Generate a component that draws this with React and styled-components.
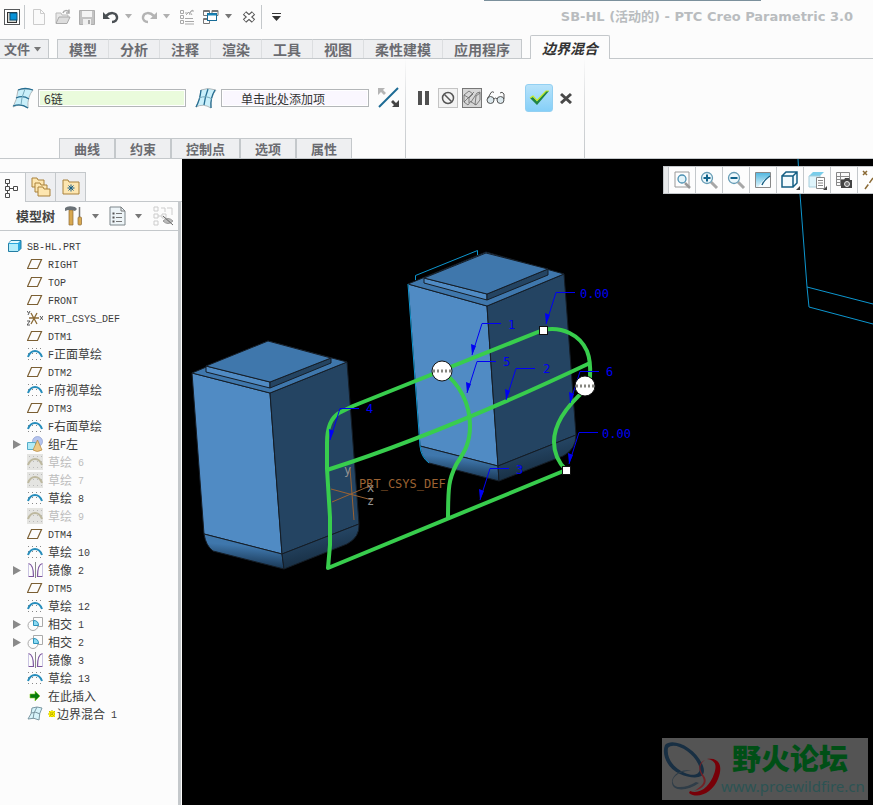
import React from "react";
import styled, { createGlobalStyle, css } from "styled-components";

const CJK = '"Noto Sans CJK SC", sans-serif';

const Global = createGlobalStyle`
  *, *::before, *::after { box-sizing: border-box; }
  body { margin: 0; background: #fcfcfc; font-family: "Liberation Sans", ${CJK}; color: #444; }
  button, input { font: inherit; color: inherit; }
  ul { margin: 0; padding: 0; list-style: none; }
  svg { display: block; flex: none; }
`;

const Shell = styled.div`
  display: flex;
  flex-direction: column;
  min-height: 100vh;
  overflow: hidden;
`;

/* ---------- title bar ---------- */
const TitleBar = styled.header`
  position: relative;
  display: flex;
  align-items: center;
  justify-content: space-between;
  height: 33px;
  padding: 0 20px 0 4px;
`;
const TopEdge = styled.div`
  position: absolute;
  top: 0;
  left: 484px;
  right: 112px;
  height: 1px;
  background: #7b909c;
`;
const QuickAccess = styled.div`
  display: flex;
  align-items: center;
  gap: 8px;
`;
const Title = styled.h1`
  margin: 0;
  font: bold 13px/16px "DejaVu Sans", ${CJK};
  color: #b9bcbf;
  white-space: nowrap;
`;
const IconButton = styled.button`
  display: grid;
  place-items: center;
  flex: none;
  width: ${(p) => p.$w || 16}px;
  height: ${(p) => p.$h || 16}px;
  margin: 0;
  padding: 0;
  border: 0;
  background: none;
`;
const CaretButton = styled(IconButton)`
  width: 9px;
  margin-left: -3px;
`;
const Divider = styled.span`
  width: 1px;
  height: 24px;
  margin: 0 -2px 0 -4px;
  background: #c4c8cb;
`;

/* ---------- ribbon tabs ---------- */
const Ribbon = styled.nav`
  display: flex;
  align-items: flex-end;
  height: 26px;
  border-bottom: 1px solid #c4c8cb;
`;
const tabBase = css`
  margin: 0;
  border: 1px solid #c4c8cb;
  border-bottom: 0;
  background: #eeeff1;
  color: #6a6b70;
  font-family: ${CJK};
  font-weight: 700;
  white-space: nowrap;
`;
const FileTab = styled.button`
  ${tabBase}
  display: flex;
  align-items: center;
  gap: 3px;
  height: 19px;
  padding: 0 6px 0 4px;
  border-left: 0;
  font-size: 13px;
  line-height: 16px;
`;
const TabStrip = styled.div`
  display: flex;
  margin-left: 8px;
  border-left: 1px solid #c4c8cb;
`;
const RibbonTab = styled.button`
  ${tabBase}
  height: 19px;
  padding: 0 11px;
  border-left: 0;
  border-right-color: ${(p) => (p.$last ? "#c4c8cb" : "#dcdee0")};
  font-size: 14px;
  line-height: 16px;
`;
const ActiveTab = styled.button`
  ${tabBase}
  height: 24px;
  margin: 0 0 -1px 8px;
  padding: 0 11px;
  border-radius: 2px 2px 0 0;
  background: #fcfcfc;
  color: #333;
  font-size: 14px;
  line-height: 20px;
  font-style: italic;
`;

/* ---------- dashboard ---------- */
const Dashboard = styled.section`
  display: flex;
  height: 100px;
  border-bottom: 1px solid #c4c8cb;
`;
const DashGroup = styled.div`
  display: flex;
  flex-direction: column;
  justify-content: space-between;
  padding: ${(p) => p.$pad || "0"};
  border-right: 1px solid;
  border-image: linear-gradient(#fcfcfc, #dcdee0 40%, #c4c8cb) 1;
`;
const Fields = styled.div`
  display: flex;
  align-items: center;
  height: 28px;
  margin-top: 25px;
  gap: ${(p) => p.$gap || 0}px;
`;
const Collector = styled.input`
  width: 148px;
  height: 18px;
  margin: 0 9px 0 4px;
  padding: 0 ${(p) => (p.$prompt ? 19 : 5)}px;
  border: 1px solid #b3b6b8;
  border-radius: 0;
  background: ${(p) => (p.$prompt ? "#faf7fe" : "#eafbdc")};
  box-shadow: inset 0 0 0 1px #fff;
  color: #333;
  font: 12px/16px ${CJK};
`;
const PanelTabs = styled.div`
  display: flex;
  margin-left: 48px;
`;
const PanelTab = styled.button`
  ${tabBase}
  height: 20px;
  padding: 0 14px;
  border-width: 1px 2px 0 0;
  font-size: 13px;
  line-height: 17px;
  &:first-child { box-shadow: -1px 0 #c4c8cb; }
  &:last-child { border-right-width: 1px; }
`;
const Toggle = styled(IconButton)`
  border: 1px solid ${(p) => (p.$on ? "#777" : "#c4c4c4")};
  background: ${(p) => (p.$on ? "#d6d6d6" : "#f3f3f3")};
`;
const Accept = styled(IconButton)`
  margin-left: 15px;
  border-radius: 3px;
  border: 1px solid #93d0f2;
  background: linear-gradient(#b8e3fa, #85cff8);
`;

/* ---------- main ---------- */
const Main = styled.main`
  display: flex;
  flex: 1;
`;
const Sidebar = styled.aside`
  display: flex;
  flex-direction: column;
  flex: none;
  width: 182px;
  padding-top: 13px;
`;
const SideTabs = styled.div`
  display: flex;
  height: 30px;
  border-bottom: 1px solid #c4c8cb;
`;
const SideTab = styled.button`
  display: grid;
  place-items: center;
  width: ${(p) => (p.$active ? 26 : 30)}px;
  height: ${(p) => (p.$active ? 30 : 29)}px;
  padding: ${(p) => (p.$active ? "0 4px 0 0" : "0")};
  border: 1px solid #c4c8cb;
  border-width: 1px 1px 0 0;
  background: ${(p) => (p.$active ? "#fcfcfc" : "#eeeff1")};
`;
const SideBody = styled.div`
  flex: 1;
  margin-right: 1px;
  border-right: 3px solid #c4c8cb;
`;
const SideHead = styled.div`
  display: flex;
  align-items: center;
  height: 29px;
  padding-left: 16px;
  border-bottom: 1px solid #c4c8cb;
`;
const SideTitle = styled.h2`
  margin: 0 8px 0 0;
  width: 40px;
  font: bold 13px/18px ${CJK};
  white-space: nowrap;
`;
const Tree = styled.ul`
  padding: 6px 0;
`;
const TreeRow = styled.li`
  display: flex;
  align-items: center;
  height: 18px;
  padding-left: ${(p) => (p.$root ? 7 : 12)}px;
  color: ${(p) => (p.$dim ? "#bcbcbc" : "#3c3c3c")};
  font: 12px/18px ${CJK};
  white-space: pre;
`;
const Slot = styled.span`
  display: flex;
  width: 15px;
`;
const Mark = styled.span`
  margin: 0 -5px 0 5px;
`;
const Label = styled.span`
  height: 18px;
  margin-left: ${(p) => (p.$root ? 4 : 5)}px;
`;
const Latin = styled.span`
  font: 10px/12px "Liberation Mono", monospace;
  vertical-align: 1px;
`;

const Viewport = styled.section`
  position: relative;
  flex: 1;
  min-width: 0;
  min-height: 646px;
  background: #000;
  overflow: hidden;
`;
const Scene = styled.svg`
  position: absolute;
  inset: 0;
  width: 100%;
  height: 100%;
  text { font: 12px "DejaVu Sans Mono", monospace; }
`;
const ViewTools = styled.div`
  position: absolute;
  top: 7px;
  right: 0;
  display: flex;
  width: 210px;
  height: 28px;
  border: 1px solid #c4c8cb;
  border-right: 0;
  background: #fdfdfd;
  overflow: hidden;
`;
const Grip = styled.span`
  flex: none;
  width: 4px;
  background: #e8eaeb;
`;
const ViewTool = styled(IconButton)`
  border-left: 1px solid #c4c8cb;
`;
const Watermark = styled.div`
  position: absolute;
  right: 5px;
  bottom: 5px;
  display: flex;
  width: 206px;
  height: 62px;
  background: #545454;
`;
const MarkText = styled.div`
  display: flex;
  flex-direction: column;
  margin-left: -3px;
  white-space: nowrap;
`;
const MarkName = styled.strong`
  margin-left: 11px;
  color: #004f16;
  font: 900 29px/38px ${CJK};
`;
const MarkUrl = styled.span`
  color: #2c5353;
  font: 15px/20px "Noto Sans", sans-serif;
`;

/* ---------- icons ---------- */
const Svg = ({ w = 16, h = 16, children }) => (
  <svg width={w} height={h} viewBox={`0 0 ${w} ${h}`} fill="none" aria-hidden="true">{children}</svg>
);
const Caret = ({ c = "#777" }) => <Svg w={9} h={5}><path d="M1 0H8L4.500 4.500Z" fill={c} /></Svg>;

const AppIcon = () => (
  <Svg><rect x=".5" y=".5" width="15" height="15" fill="#fff" stroke="#56595b" /><rect x="3.500" y="3.500" width="9" height="10" fill="#d5d5ce" stroke="#333" /><rect x="6" y="4" width="7" height="7" fill="#0792d8" stroke="#075078" /></Svg>
);
const NewIcon = () => <Svg><path d="M2.500.5h7l4 4v11h-11zM9.500.5v4h4" fill="#fafafa" stroke="#ccc" /></Svg>;
const OpenIcon = () => (
  <Svg><path d="M1 14V4h5l1 2h6v2" fill="#e8e8e8" stroke="#b9b9b9" /><path d="M1 14.500 4 8h11l-3 6.500z" fill="#ddd" stroke="#aaa" /><path d="M8 4c1-3 4-3 6-1M14 .5V4h-3" stroke="#aaa" strokeWidth="1.500" /></Svg>
);
const SaveIcon = () => (
  <Svg><path d="M.5 1.500h15v14H.5z" fill="#c3c3c3" stroke="#aeaeae" /><rect x="3" y="2" width="10" height="6" fill="#f4f4f4" /><rect x="4" y="10" width="8" height="6" fill="#f0f0f0" /><rect x="9" y="11" width="2" height="4" fill="#aaa" /></Svg>
);
const UndoIcon = ({ c = "#4a4f53", flip }) => (
  <Svg><g transform={flip ? "translate(16 0) scale(-1 1)" : undefined}><path d="M3 7C7 3 13 3 14 8c.5 3-2 5-5 5" stroke={c} strokeWidth="2.500" /><path d="M0 3v7h7z" fill={c} /></g></Svg>
);
const RegenIcon = () => (
  <Svg><path d="M1.500 1.500h3v3h-3zM1.500 6.500h3v3h-3zM1.500 11.500h3v3h-3zM6 9.500h8M6 12.500h9M6 15h9M7 6l3-3 1 3M14 1l-3 2 2 3M6 4h3M12 2h3" stroke="#a8a8a8" /></Svg>
);
const WindowsIcon = () => (
  <Svg><path d="M.5 1.500h6v5h-6zM9 1.500h6v5H9zM.5 9.500h6v5h-6zM.5 2.500h6M9 2.500h6M.5 10.500h6" stroke="#777" /><rect x="4.500" y="4.500" width="9" height="7" fill="#fff" stroke="#176b96" /><path d="M4.500 5.500h9" stroke="#1684b8" strokeWidth="2" /></Svg>
);
const CloseWinIcon = () => (
  <Svg><path d="m3.500 4 9 8M12.500 4l-9 8" stroke="#555" strokeWidth="5" /><path d="m4 4.500 8 7M12 4.500l-8 7" stroke="#fff" strokeWidth="2.500" /></Svg>
);
const SurfaceIcon = ({ two }) => (
  <Svg w={22} h={22}>
    <path d="M6 3q7-3 15 0-6 7-5 18-8-5-15-1 4-7 5-17Z" fill="#c9effa" stroke="#b0b8bb" />
    {two
      ? <path d="M6 3Q5 13 1 20M13 2q-3 8-4 16M20 3q-5 8-4 18" stroke="#266e92" strokeWidth="1.300" />
      : <path d="M6 3q7-3 15 0M4 11q7-3 13 1M1 19q8-3 15 2" stroke="#266e92" strokeWidth="1.300" />}
    <path d={two ? "M4 11q7-3 13 1" : "M13 2Q9 11 9 18"} stroke="#76aabd" />
  </Svg>
);
const FlipIcon = () => (
  <Svg w={22} h={22}><path d="M1 20 20 1" stroke="#1c6a94" strokeWidth="2" /><path d="M0 1h7L5 3l3 3-2 2-3-3-3 3z" fill="#b5b5b5" /><path d="M21 20h-7l2-2-3-3 2-2 3 3 3-3z" fill="#444" /></Svg>
);
const NoIcon = () => <Svg><circle cx="8" cy="8" r="5.500" stroke="#555" strokeWidth="1.500" /><path d="m4.500 4.500 7 7" stroke="#555" strokeWidth="1.500" /></Svg>;
const MeshIcon = () => (
  <Svg w={18} h={18}><path d="m1 6 5-4 4 3-4 4zM1 6v7l4 3 3-4M6 9v5M8 13l6-9 3-1v8l-4 5-3-2zM1 13 11 3M12 16l1-9 4-3" stroke="#666" strokeWidth=".8" /></Svg>
);
const GlassesIcon = () => (
  <Svg w={20} h={16}><g stroke="#555"><circle cx="4.500" cy="10" r="3.500" fill="#dce8ed" /><circle cx="14.500" cy="10" r="3.500" fill="#dce8ed" /><path d="M8 9q2-2 3 0M1.500 9 5 2.500q2-1.500 3 0M18 9V4q-2-3-4-1" /></g></Svg>
);
const CheckIcon = () => (
  <Svg w={20} h={16}><path d="m1 8 3-1 4 4L17 1h3L8 15z" fill="#208448" /><path d="m1 8 3-2 4 4.500L17 1h3" stroke="#c3ec24" strokeWidth="1.200" /></Svg>
);

const TreeTabIcon = () => <Svg w={14} h={20}><path d="M1.500 1.500h4v4h-4zM1.500 8.500h4v4h-4zM1.500 15.500h4v4h-4zM9.500 8.500h4v4h-4zM3.500 5.500v3M3.500 12.500v3M5.500 10.500h4" stroke="#4a4a4a" /></Svg>;
const folder = (x, y, w = 12, h = 9) => <path key={x} d={`M${x} ${y + 2}v-2h5l1 2h${w - 6}v${h - 2}h-${w}z`} fill="#fde6b0" stroke="#a9813a" />;
const FoldersIcon = () => <Svg w={20} h={20}>{folder(1, 1)}{folder(4, 6)}{folder(7, 10)}</Svg>;
const FavIcon = () => <Svg w={18} h={16}>{folder(1, 1, 16, 14)}<path d="M9 5.500v7M5.500 9h7M6.500 6.500l5 5M11.500 6.500l-5 5" stroke="#175f88" /></Svg>;
const HammerIcon = () => (
  <Svg w={18} h={20}><path d="M4 4h4v15H4z" fill="#d8a850" stroke="#8c6a36" strokeWidth=".7" /><path d="M0 2q3-3 10-1l2 2-2 2-3-1H3L0 5z" fill="#6b7277" /><path d="M14.500 1v10" stroke="#777" strokeWidth="1.500" /><rect x="13" y="11" width="3.500" height="8" rx="1" fill="#d8a850" stroke="#8c6a36" strokeWidth=".7" /></Svg>
);
const ListIcon = () => <Svg w={17} h={20}><path d="M1 1h11l4 4v14H1z" fill="#eef5f8" stroke="#7c868b" /><path d="M12 1v4h4M7 7.500h6M7 11.500h6M7 15.500h6" stroke="#777" /><path d="M3.500 7.500h2M3.500 11.500h2M3.500 15.500h2" stroke="#555" strokeWidth="2" /></Svg>;
const HideIcon = () => <Svg w={21} h={20}><path d="M1 1h4v4H1zM1 8h4v4H1zM1 15h4v4H1zM9 8h4v4H9zM5 10h4M8 2h4v4M14 2h5v7" stroke="#ccc" /><path d="M10 15q5-5 10 0-5 5-10 0Z" fill="#bbb" stroke="#999" /><path d="m10 10 10 9" stroke="#666" /></Svg>;

const TreeIcons = {
  part: <Svg><path d="M1.500 5.500 4 2.500h10v8l-3 3H1.500z" fill="#29a7dd" stroke="#247da3" /><path d="M2 6h9v7H2z" fill="#b2edfb" /><path d="M2 5 4 3h9l-2 2z" fill="#e1faff" /></Svg>,
  plane: <Svg><path d="M4.500 3.500h10l-4 9h-10z" stroke="#7b5f33" strokeWidth="1.200" /></Svg>,
  csys: <Svg><path d="M2 8h10M4 3l6 11M10 3 4 14" stroke="#8a6a35" strokeWidth="1.300" /><path d="m0 1 1.500 2M3 1 1 5M0 11h3l-3 4h3M13 6l3 4M16 6l-3 4" stroke="#444" strokeWidth=".9" /></Svg>,
  sketch: <Svg><path d="M1 2.500h14M1 7.500h14M1 13.500h14" stroke="#888" strokeDasharray="1 3" /><path d="M1 11C4 3 12 3 15 11" stroke="#278dbb" strokeWidth="2" /></Svg>,
  sketchOff: <Svg><rect width="16" height="16" fill="#e4e4e1" /><path d="M2 2.500h14M2 7.500h14M2 13.500h14" stroke="#bbb" strokeDasharray="1 3" /><path d="M1 11C4 3 12 3 15 11" stroke="#bdb89f" strokeWidth="2" /></Svg>,
  group: <Svg><circle cx="10.500" cy="5.500" r="5" fill="#b5c4ee" stroke="#8e9fce" strokeWidth=".7" /><path d="M.5 6.500h8v7h-8z" fill="#b2ebf7" stroke="#55adc9" /><path d="M10.500 4 15 14q-5 3-9 0z" fill="#edc986" stroke="#b4873c" strokeWidth=".7" /></Svg>,
  mirror: <Svg><path d="M1.500 1.500q5 1 5 13h-5M15.500 1.500q-5 1-5 13h5" stroke="#7d569f" strokeWidth="1.200" /><path d="M1.500 2v12M15.500 2v12" stroke="#c9c4e2" /><path d="M8.500 0v16" stroke="#888" /></Svg>,
  intersect: <Svg><path d="M6.500 1.500h9v9h-9z" stroke="#aaa" /><circle cx="6" cy="9.500" r="5" fill="#fcfcfc" stroke="#aaa" /><path d="M6.500 4.500v5h5q0-5-5-5Z" fill="#8bdaf2" stroke="#2c92ba" /></Svg>,
  insert: <Svg><path d="M3 6h5V3l5 5-5 5v-3H3z" fill="#087a0e" stroke="#8bcf20" strokeWidth=".6" /></Svg>,
  surface: <Svg><path d="M5 2q5-2 10 0-3 5-3 12-5-3-11-1 4-5 4-11Z" fill="#d6f3fa" stroke="#7a97a2" /><path d="M10 1q-4 6-4 12M4 7q5-2 9 1" stroke="#7a97a2" /></Svg>,
};

const Lens = ({ sign }) => <Svg w={20} h={20}><path d="m12 12 6 6" stroke="#a7a7a7" strokeWidth="3" /><circle cx="8" cy="8" r="5.500" fill="#edf8fc" stroke="#669cb5" strokeWidth="1.300" /><path d={sign} stroke="#12648c" strokeWidth="2" /></Svg>;
const ViewIcons = [
  ["适合屏幕", <Svg w={18} h={18}><path d="M2 1h14v15H2z" stroke="#999" /><circle cx="9" cy="8" r="4" fill="#e3f4fa" stroke="#4c91b2" strokeWidth="1.300" /><path d="m12 12 5 5" stroke="#999" strokeWidth="2.500" /></Svg>],
  ["放大", <Lens sign="M4.500 8h7M8 4.500v7" />],
  ["缩小", <Lens sign="M4.500 8h7" />],
  ["重画", <Svg w={18} h={18}><defs><linearGradient id="rp" x2="0" y2="1"><stop stopColor="#4fb6df" /><stop offset="1" stopColor="#e4f6fc" /></linearGradient></defs><path d="M1.500 1.500h15v15h-15z" fill="url(#rp)" stroke="#888" /><path d="M16 5Q8 9 4 16h12z" fill="#f8fdff" /><path d="M16 5q-6 4-8 9" stroke="#145f84" strokeWidth="1.500" /></Svg>],
  ["显示样式", <Svg w={20} h={20}><path d="M2 6h11v11H2zM2 6l4-4h11v11l-4 4M13 6l4-4" fill="#f3fbfe" stroke="#155f84" strokeWidth="1.500" /><path d="M20 16v4h-4z" fill="#444" /></Svg>],
  ["已保存方向", <Svg w={20} h={20}><path d="m2 6 4-4h11l-4 4z" fill="#79cdea" /><path d="M2 6h11v11H2z" fill="#dff5fc" stroke="#a6cddb" /><path d="M9.500 7.500h8v11h-8z" fill="#fff" stroke="#888" /><path d="M11 10.500h5M11 13h5M11 15.500h5" stroke="#888" /><path d="M20 16v4h-4z" fill="#444" /></Svg>],
  ["视图管理器", <Svg w={18} h={18}><path d="M1.500 1.500h13v13h-13zM1.500 5.500h13M1.500 8.500h13M1.500 11.500h13M5.500 1.500v13" fill="#fafafa" stroke="#888" /><path d="M6 9h3l1-2h4l1 2h2v8H6z" fill="#444" /><circle cx="12" cy="13" r="2.500" fill="#777" stroke="#eee" /></Svg>],
  ["基准显示", <Svg w={20} h={20}><path d="m2 1 4 4M6 1 2 5M12 8l-8 11M13 4h4" stroke="#8a6a35" strokeWidth="1.500" strokeDasharray="6 2" /></Svg>],
];

/* ---------- data ---------- */
const TREE = [
  ["plane", "RIGHT"], ["plane", "TOP"], ["plane", "FRONT"], ["csys", "PRT_CSYS_DEF"],
  ["plane", "DTM1"], ["sketch", "F正面草绘"], ["plane", "DTM2"], ["sketch", "F府视草绘"],
  ["plane", "DTM3"], ["sketch", "F右面草绘"], ["group", "组F左", true],
  ["sketchOff", "草绘 6"], ["sketchOff", "草绘 7"], ["sketch", "草绘 8"], ["sketchOff", "草绘 9"],
  ["plane", "DTM4"], ["sketch", "草绘 10"], ["mirror", "镜像 2", true], ["plane", "DTM5"],
  ["sketch", "草绘 12"], ["intersect", "相交 1", true], ["intersect", "相交 2", true],
  ["mirror", "镜像 3"], ["sketch", "草绘 13"], ["insert", "在此插入"], ["surface", "边界混合 1"],
];
const RIBBON = ["模型", "分析", "注释", "渲染", "工具", "视图", "柔性建模", "应用程序"];
const PANELS = ["曲线", "约束", "控制点", "选项", "属性"];

const Mixed = ({ text }) =>
  text.match(/[\x20-\x7e]+|[^\x20-\x7e]+/g).map((run, i) =>
    run.charCodeAt(0) < 128 ? <Latin key={i}>{run}</Latin> : <span key={i}>{run}</span>
  );

const CALLOUTS = [
  [472, 355, "1", 508, 329], [467, 393, "5", 503, 366], [506, 400, "2", 543, 373],
  [480, 500, "3", 516, 474], [570, 403, "6", 606, 376], [330, 440, "4", 366, 413],
  [546, 324, "0.00", 580, 298], [569, 464, "0.00", 602, 438],
];

const Box = ({ d }) => (
  <g stroke="#151d26" strokeWidth="1" strokeLinejoin="round">
    <path d={d.front} fill="#508bc4" />
    <path d={d.right} fill="#244462" />
    <path d={d.top} fill="#3f77ac" />
    <path d={d.stepL} fill="#508bc4" />
    <path d={d.stepR} fill="#244462" />
    <path d={d.plate} fill="#3f77ac" />
    <path d={d.baseL} fill="url(#baseL)" />
    <path d={d.baseR} fill="url(#baseR)" />
  </g>
);
const LEFT = {
  front: "M192 373 270 393 282 554 204 534Z", right: "M270 393 347 362 359 524 282 554Z",
  top: "M192 373 268 341 347 362 270 393Z", plate: "M206 366 268 341 331 358 270 382Z",
  stepL: "M206 366 270 382V388L206 372Z", stepR: "M270 382 331 358V363L270 388Z",
  baseL: "M204 534 282 554 284 569 213 551Q206 546 204 534Z",
  baseR: "M282 554 359 524Q360 537 347 544L284 569Z",
};
const RIGHT = {
  front: "M408 284 487 306 498 466 420 446Z", right: "M487 306 564 274 576 435 498 466Z",
  top: "M408 284 486 252 564 274 487 306Z", plate: "M424 278 486 253 548 269 487 294Z",
  stepL: "M424 278 487 294V300L424 283Z", stepR: "M487 294 548 269V275L487 300Z",
  baseL: "M420 446 498 466 499 481 429 463Q421 457 420 446Z",
  baseR: "M498 466 576 435Q576 449 563 456L499 481Z",
};

const Model = () => (
  <Scene viewBox="182 159 691 646" preserveAspectRatio="xMinYMin slice" role="img" aria-label="SB-HL.PRT">
    <defs>
      <linearGradient id="baseL" x1=".55" y1=".35" x2=".45" y2=".85"><stop stopColor="#3f77ac" /><stop offset="1" stopColor="#1d3d5c" /></linearGradient>
      <linearGradient id="baseR" x1=".4" y1=".3" x2=".6" y2=".8"><stop stopColor="#244462" /><stop offset="1" stopColor="#182f44" /></linearGradient>
    </defs>
    <Box d={LEFT} />
    <Box d={RIGHT} />
    <g fill="none" stroke="#0d96cf" strokeWidth="1">
      <path d="M415.500 280V275.500L477.500 250.500V255M408 284 420 446Q421 457 429 463" />
      <path d="M798 159 800 194 807 287 809 307 873 324M807 287 873 304" />
    </g>
    <g fill="none" stroke="#9b6232" strokeWidth="1">
      <path d="M350 468 354 520M331 489 372 500M332 502 372 485" />
    </g>
    <text x="359" y="488" fill="#9b6232">PRT_CSYS_DEF</text>
    <g fill="#929292"><text x="344" y="474">y</text><text x="367" y="492">x</text><text x="367" y="505">z</text></g>
    <g fill="none" stroke="#38cd4d" strokeWidth="4" strokeLinejoin="round">
      <path d="M543 330 353 406 339 413Q327 420 327 443V469L330 517V545L328 568 566 470" />
      <path d="M543 330C562 326 580 335 587 351Q591 361 590 377L585 390C568 405 554 422 554 442Q554 458 566 470" />
      <path d="M327 470Q440 434 590 363" />
      <path d="M442 371C460 384 470 404 470 426C470 448 460 457 456 465C449 479 448 486 448 520" />
    </g>
    {CALLOUTS.map(([x, y, label, tx, ty]) => (
      <g key={`${x}-${y}`}>
        <path d={`M${x + 29} ${y - 31.5}h-19L${x} ${y}`} fill="none" stroke="#0000f5" />
        <path d={`M${x} ${y}l-1-11 5 2z`} fill="#0000f5" />
        <text x={tx} y={ty} fill="#0000f5">{label}</text>
      </g>
    ))}
    {[[442, 371], [585, 386]].map(([x, y]) => (
      <g key={x}>
        <circle cx={x} cy={y} r="10" fill="#fff" stroke="#151515" />
        <path d={`M${x - 9} ${y}h19`} stroke="#85857f" strokeWidth="3" strokeDasharray="2 2" />
      </g>
    ))}
    {[[543, 330], [566, 470]].map(([x, y]) => (
      <rect key={x} x={x - 3.5} y={y - 3.5} width="8" height="8" fill="#fff" stroke="#111" />
    ))}
  </Scene>
);

const Logo = () => (
  <Svg w={62} h={62}>
    <g fillRule="evenodd">
      <path d="M3 7C10-1 34 9 41 28c5 14-11 13-23 8C6 31-1 17 3 7Zm3 3c-2 11 7 21 17 25 9 4 17 1 14-7C32 14 12 3 6 10Z" fill="#182f43" />
      <path d="M45 21c13-2 16 8 11 20-5 13-20 21-29 14l1-2c10 4 20-5 24-17 3-8 2-14-7-15Z" fill="#780008" />
      <path d="M29 33c-10-1-20 6-18 12 2 7 15 4 23-1l3 1c-11 8-26 9-27 0-1-7 9-15 19-12Z" fill="#2f3d48" />
      <path d="M43 22c-7 5-5 11-1 16 5 7-2 13-10 15 9-5 12-9 8-15-4-7-4-13 3-16Z" fill="#742025" />
    </g>
  </Svg>
);

export default function App() {
  return (
    <Shell>
      <Global />
      <TitleBar>
        <TopEdge />
        <QuickAccess>
          <IconButton aria-label="Creo"><AppIcon /></IconButton>
          <Divider />
          <IconButton aria-label="新建"><NewIcon /></IconButton>
          <IconButton aria-label="打开"><OpenIcon /></IconButton>
          <IconButton aria-label="保存"><SaveIcon /></IconButton>
          <IconButton aria-label="撤消"><UndoIcon /></IconButton>
          <CaretButton aria-label="撤消列表"><Caret c="#b0b0b0" /></CaretButton>
          <IconButton aria-label="重做"><UndoIcon c="#b4b4b4" flip /></IconButton>
          <CaretButton aria-label="重做列表"><Caret c="#b0b0b0" /></CaretButton>
          <IconButton aria-label="重新生成"><RegenIcon /></IconButton>
          <IconButton aria-label="窗口"><WindowsIcon /></IconButton>
          <CaretButton aria-label="窗口列表"><Caret /></CaretButton>
          <IconButton aria-label="关闭"><CloseWinIcon /></IconButton>
          <Divider />
          <IconButton aria-label="自定义"><Svg w={9} h={8}><path d="M0 .5h9" stroke="#333" /><path d="M0 3h9L4.500 8z" fill="#333" /></Svg></IconButton>
        </QuickAccess>
        <Title>SB-HL (活动的) - PTC Creo Parametric 3.0</Title>
      </TitleBar>

      <Ribbon>
        <FileTab>文件<Caret /></FileTab>
        <TabStrip>
          {RIBBON.map((t, i) => <RibbonTab key={t} $last={i === RIBBON.length - 1}>{t}</RibbonTab>)}
        </TabStrip>
        <ActiveTab>边界混合</ActiveTab>
      </Ribbon>

      <Dashboard>
        <DashGroup $pad="0 5px 0 12px">
          <Fields>
            <SurfaceIcon />
            <Collector aria-label="第一方向链" defaultValue="6链" />
            <SurfaceIcon two />
            <Collector aria-label="第二方向链" $prompt defaultValue="单击此处添加项" />
            <IconButton $w={22} $h={22} aria-label="反向"><FlipIcon /></IconButton>
          </Fields>
          <PanelTabs>{PANELS.map((t) => <PanelTab key={t}>{t}</PanelTab>)}</PanelTabs>
        </DashGroup>
        <DashGroup $pad="0 9px 0 7px">
          <Fields $gap={4}>
            <IconButton $w={21} aria-label="暂停"><Svg w={11} h={14}><path d="M0 0h4v14H0zM7 0h4v14H7z" fill="#505050" /></Svg></IconButton>
            <Toggle $w={20} $h={20} aria-label="无预览"><NoIcon /></Toggle>
            <Toggle $w={20} $h={20} $on aria-label="分离预览"><MeshIcon /></Toggle>
            <IconButton $w={20} aria-label="预览"><GlassesIcon /></IconButton>
            <Accept $w={28} $h={28} aria-label="确定"><CheckIcon /></Accept>
            <IconButton $w={18} aria-label="取消"><Svg w={12} h={12}><path d="m1 2 10 9M11 2 1 11" stroke="#484848" strokeWidth="3" /></Svg></IconButton>
          </Fields>
        </DashGroup>
      </Dashboard>

      <Main>
        <Sidebar>
          <SideTabs>
            <SideTab $active aria-label="模型树"><TreeTabIcon /></SideTab>
            <SideTab aria-label="文件夹浏览器"><FoldersIcon /></SideTab>
            <SideTab aria-label="收藏夹"><FavIcon /></SideTab>
          </SideTabs>
          <SideBody>
            <SideHead>
              <SideTitle>模型树</SideTitle>
              <IconButton $w={20} $h={20} aria-label="设置"><HammerIcon /></IconButton>
              <IconButton $w={23} $h={20} aria-label="设置列表"><Caret /></IconButton>
              <IconButton $w={20} $h={20} aria-label="显示"><ListIcon /></IconButton>
              <IconButton $w={22} $h={20} aria-label="显示列表"><Caret /></IconButton>
              <IconButton $w={28} $h={20} aria-label="隐藏"><HideIcon /></IconButton>
            </SideHead>
            <Tree>
              <TreeRow $root>{TreeIcons.part}<Label $root><Mixed text="SB-HL.PRT" /></Label></TreeRow>
              {TREE.map(([icon, text, open]) => (
                <TreeRow key={text} $dim={icon === "sketchOff"}>
                  <Slot>{open && <IconButton $w={9} $h={10} aria-label={`展开 ${text}`}><Svg w={8} h={9}><path d="M0 0v9l8-4.500z" fill="#8a8a8a" /></Svg></IconButton>}</Slot>
                  {TreeIcons[icon]}
                  {icon === "surface" && <Mark><Svg w={9} h={9}><path d="M1 1h6v6H1z" fill="#fff200" /><path d="M4 0v8M0 4h8M1 1l6 6M7 1 1 7" stroke="#b4a400" strokeDasharray="1 1" /></Svg></Mark>}
                  <Label><Mixed text={text} /></Label>
                </TreeRow>
              ))}
            </Tree>
          </SideBody>
        </Sidebar>
        <Viewport>
          <Model />
          <ViewTools>
            <Grip />
            {ViewIcons.map(([name, icon]) => <ViewTool key={name} $w={27} $h={26} aria-label={name}>{icon}</ViewTool>)}
          </ViewTools>
          <Watermark>
            <Logo />
            <MarkText><MarkName>野火论坛</MarkName><MarkUrl>www.proewildfire.cn</MarkUrl></MarkText>
          </Watermark>
        </Viewport>
      </Main>
    </Shell>
  );
}
